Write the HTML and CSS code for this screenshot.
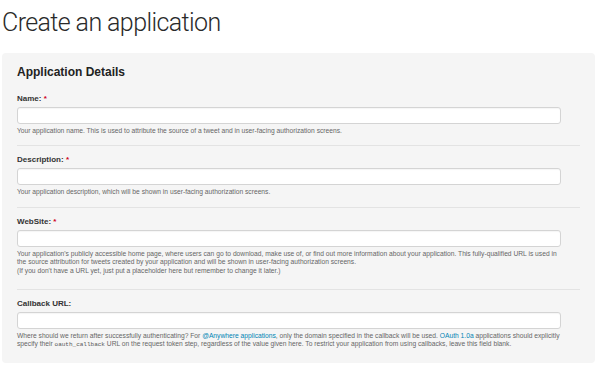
FILE: index.html
```html
<!DOCTYPE html>
<html>
<head>
    <title>Create an application</title>
    <link rel="stylesheet" href="styles.css">
</head>
<body>
    <h1 class="page-title">Create an application</h1>

    <div class="panel">
        <h2 class="panel-title">Application Details</h2>

        <div class="field">
            <label class="field-label">Name: <span class="req">*</span></label>
            <input class="field-input" type="text">
            <p class="field-help">Your application name. This is used to attribute the source of a tweet and in user-facing authorization screens.</p>
        </div>

        <div class="field">
            <label class="field-label">Description: <span class="req">*</span></label>
            <input class="field-input" type="text">
            <p class="field-help">Your application description, which will be shown in user-facing authorization screens.</p>
        </div>

        <div class="field">
            <label class="field-label">WebSite: <span class="req">*</span></label>
            <input class="field-input" type="text">
            <p class="field-help field-help-long">Your application's publicly accessible home page, where users can go to download, make use of, or find out more information about your application. This fully-qualified URL is used in<br>the source attribution for tweets created by your application and will be shown in user-facing authorization screens.<br>(If you don't have a URL yet, just put a placeholder here but remember to change it later.)</p>
        </div>

        <div class="field field-last">
            <label class="field-label">Callback URL:</label>
            <input class="field-input" type="text">
            <p class="field-help">Where should we return after successfully authenticating? For <a href="#">@Anywhere applications</a>, only the domain specified in the callback will be used. <a href="#">OAuth 1.0a</a> applications should explicitly<br>specify their <code>oauth_callback</code> URL on the request token step, regardless of the value given here. To restrict your application from using callbacks, leave this field blank.</p>
        </div>
    </div>
</body>
</html>
```

FILE: styles.css
```css
body {
    margin: 0;
    padding: 8px 5px 0 2px;
    background-color: #fff;
    color: #333;
    font-family: 'Liberation Sans', Arial, sans-serif;
}
.page-title {
    margin: 0 0 15px;
    font-family: 'Roboto', 'Liberation Sans', sans-serif;
    font-weight: 300;
    font-size: 25px;
    letter-spacing: -0.6px;
    line-height: 30px;
    color: #2a2a2a;
}
.panel {
    background-color: #f5f5f5;
    border-radius: 4px;
    padding: 11px 15px 14px;
}
.panel-title {
    margin: 0 0 14px;
    font-size: 12px;
    line-height: 16px;
    font-weight: 700;
    color: #222;
}
.field {
    padding-bottom: 10px;
    margin-bottom: 9px;
    border-bottom: 1px solid #e3e3e3;
}
.field-last {
    border-bottom: none;
    margin-bottom: 0;
    padding-bottom: 0;
}
.field-label {
    display: block;
    font-size: 8px;
    line-height: 10px;
    font-weight: 700;
    color: #333;
}
.req {
    color: #d0021b;
}
.field-input {
    display: block;
    box-sizing: border-box;
    width: 544px;
    height: 17px;
    margin: 3px 0 0;
    padding: 0 4px;
    background-color: #fff;
    border: 1px solid #d4d4d4;
    border-radius: 3px;
    box-shadow: inset 0 1px 1px rgba(0, 0, 0, 0.04);
    outline: none;
}
.field-help {
    margin: 3px 0 0;
    font-size: 6.7px;
    line-height: 8.4px;
    color: #666;
}
.field-help-long {
    margin-bottom: 4px;
}
.field-help a {
    color: #0084b4;
    text-decoration: none;
}
.field-help code {
    font-family: 'Liberation Mono', monospace;
    font-size: 6px;
    line-height: 1;
    color: #555;
}
```
